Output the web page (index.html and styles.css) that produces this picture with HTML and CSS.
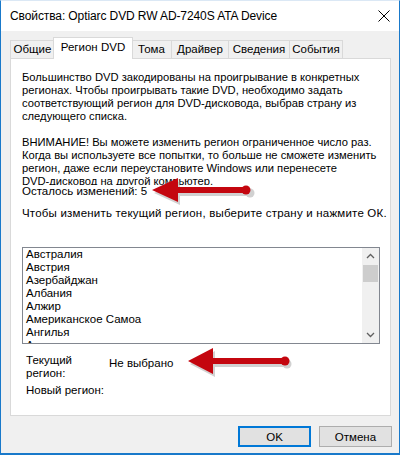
FILE: index.html
```html
<!DOCTYPE html>
<html lang="ru">
<head>
<meta charset="utf-8">
<link rel="stylesheet" href="styles.css">
</head>
<body>
<div class="window">
  <div class="titlebar">
    <span class="title">Свойства: Optiarc DVD RW AD-7240S ATA Device</span>
    <svg class="close" width="12" height="12" viewBox="0 0 12 12"><path d="M0.5 0.5 L11.5 11.5 M11.5 0.5 L0.5 11.5" stroke="#000" stroke-width="1" fill="none"/></svg>
  </div>
  <div class="dialog">
    <div class="tabs">
      <div class="tab t1">Общие</div>
      <div class="tab active t2">Регион DVD</div>
      <div class="tab t3">Тома</div>
      <div class="tab t4">Драйвер</div>
      <div class="tab t5">Сведения</div>
      <div class="tab t6">События</div>
    </div>
    <div class="panel">
      <p class="para">Большинство DVD закодированы на проигрывание в конкретных<br>регионах. Чтобы проигрывать такие DVD, необходимо задать<br>соответствующий регион для DVD-дисковода, выбрав страну из<br>следующего списка.</p>
      <p class="para warn">ВНИМАНИЕ! Вы можете изменить регион ограниченное число раз.<br>Когда вы используете все попытки, то больше не сможете изменить<br>регион, даже если переустановите Windows или перенесете<br>DVD-дисковод на другой компьютер.</p>
      <div class="remain">Осталось изменений: 5</div>
      <p class="hint">Чтобы изменить текущий регион, выберите страну и нажмите ОК.</p>
      <div class="listbox">
        <ul class="items">
          <li>Австралия</li>
          <li>Австрия</li>
          <li>Азербайджан</li>
          <li>Албания</li>
          <li>Алжир</li>
          <li>Американское Самоа</li>
          <li>Ангилья</li>
          <li>Ангола</li>
        </ul>
        <div class="scrollbar">
          <svg class="sarrow" width="17" height="17" viewBox="0 0 17 17"><path d="M5 10 L8.5 6.5 L12 10" stroke="#606060" stroke-width="1.3" fill="none"/></svg>
          <div class="track"><div class="thumb"></div></div>
          <svg class="sarrow" width="17" height="17" viewBox="0 0 17 17"><path d="M5 7 L8.5 10.5 L12 7" stroke="#606060" stroke-width="1.3" fill="none"/></svg>
        </div>
      </div>
      <div class="regions">
        <div class="lbl cur">Текущий регион:</div>
        <div class="val">Не выбрано</div>
        <div class="lbl new">Новый регион:</div>
      </div>
    </div>
  </div>
  <div class="buttons">
    <button class="btn default">OK</button>
    <button class="btn">Отмена</button>
  </div>
  <svg class="arrow a1" width="110" height="34" viewBox="0 0 110 34">
    <g transform="translate(2,3)" fill="#9a9a9a" opacity="0.45">
      <path d="M0 12 L26 0 L26 9 L96 9 L96 15 L26 15 L26 24 Z"/>
      <circle cx="96" cy="12" r="4.5"/>
    </g>
    <g fill="#c4060f">
      <path d="M0 12 L26 0 L26 9 L94 9 L94 15 L26 15 L26 24 Z"/>
      <circle cx="94" cy="12" r="4.5"/>
    </g>
  </svg>
  <svg class="arrow a2" width="110" height="34" viewBox="0 0 110 34">
    <g transform="translate(2,3)" fill="#9a9a9a" opacity="0.45">
      <path d="M0 13 L25 0 L25 10 L97 10 L97 16 L25 16 L25 26 Z"/>
      <circle cx="97" cy="13" r="4.5"/>
    </g>
    <g fill="#c4060f">
      <path d="M0 13 L25 0 L25 10 L97 10 L97 16 L25 16 L25 26 Z"/>
      <circle cx="97" cy="13" r="4.5"/>
    </g>
  </svg>
</div>
</body>
</html>
```
FILE: styles.css
```css
* { box-sizing: border-box; }
html, body { margin: 0; padding: 0; }
body {
  font-family: "Liberation Sans", Arial, sans-serif;
  font-size: 11.5px;
  color: #000;
  background: #fff;
}
.window {
  position: relative;
  width: 400px;
  height: 455px;
  border: 1px solid #1979ca;
  border-top: 1px solid #dbe8f5;
  border-bottom-width: 2px;
  background: #f0f0f0;
  display: flex;
  flex-direction: column;
}
.titlebar {
  height: 30px;
  background: #fff;
  display: flex;
  align-items: center;
  justify-content: space-between;
  padding: 0 9px 0 9px;
  flex: none;
}
.title {
  font-size: 12px;
  font-family: "Liberation Sans", Arial, sans-serif;
  letter-spacing: -0.1px;
}
.close { display: block; margin-right: 0px; }
.dialog {
  padding: 6px 8px 0 9px;
}
.tabs {
  display: flex;
  height: 21px;
  align-items: flex-end;
  position: relative;
  z-index: 1;
}
.tab {
  height: 18px;
  border: 1px solid #d9d9d9;
  border-bottom: none;
  background: #f0f0f0;
  padding: 2px 0 0 0;
  text-align: center;
  margin-left: -1px;
  font-size: 11.5px;
}
.tab.t1 { width: 45px; margin-left: 0; }
.tab.t2 { width: 80px; margin-left: -2px; margin-right: -2px; }
.tab.t3 { width: 41px; margin-left: 0; }
.tab.t4 { width: 58px; }
.tab.t5 { width: 62px; }
.tab.t6 { width: 54px; }
.tab.active {
  height: 22px;
  background: #fff;
  padding-top: 3px;
  position: relative;
  z-index: 2;
  margin-bottom: -1px;
}
.panel {
  background: #fff;
  border: 1px solid #d9d9d9;
  height: 358px;
  padding: 12px 8px 0 11px;
}
.para {
  margin: 0;
  line-height: 13px;
  font-size: 11.2px;
  white-space: nowrap;
}
.para + .para { margin-top: 13px; }
.warn {
  height: 49px;
  overflow: hidden;
}
.remain {
  line-height: 13px;
  font-size: 11.5px;
}
.hint {
  margin: 9px 0 0 0;
  line-height: 13px;
  font-size: 11.5px;
  letter-spacing: 0.2px;
  white-space: nowrap;
}
.listbox {
  margin-top: 27px;
  width: 358px;
  height: 97px;
  border: 1px solid #828790;
  display: flex;
  overflow: hidden;
}
.items {
  list-style: none;
  margin: 0;
  padding: 0 0 0 3px;
  flex: 1;
  line-height: 13px;
  font-size: 11.5px;
}
.scrollbar {
  width: 17px;
  background: #f0f0f0;
  display: flex;
  flex-direction: column;
}
.sarrow { display: block; flex: none; }
.track { flex: 1; }
.thumb {
  height: 17px;
  background: #cdcdcd;
  margin: 0 1px;
}
.regions {
  display: grid;
  grid-template-columns: 83px 1fr;
  margin-top: 10px;
  padding-left: 4px;
  line-height: 13px;
  font-size: 11.5px;
}
.lbl.cur { width: 60px; }
.val { padding-top: 3px; }
.lbl.new { grid-column: 1 / 3; margin-top: 4px; }
.buttons {
  display: flex;
  justify-content: flex-end;
  gap: 8px;
  padding: 10px 7px 0 0;
}
.btn {
  width: 73px;
  height: 21px;
  border: 1px solid #adadad;
  background: #e1e1e1;
  font-family: "Liberation Sans", Arial, sans-serif;
  font-size: 11.5px;
  color: #000;
  padding: 0;
}
.btn.default {
  border: 2px solid #0078d7;
}
.arrow { position: absolute; }
.a1 { left: 151px; top: 177px; }
.a2 { left: 187px; top: 347px; }
```
